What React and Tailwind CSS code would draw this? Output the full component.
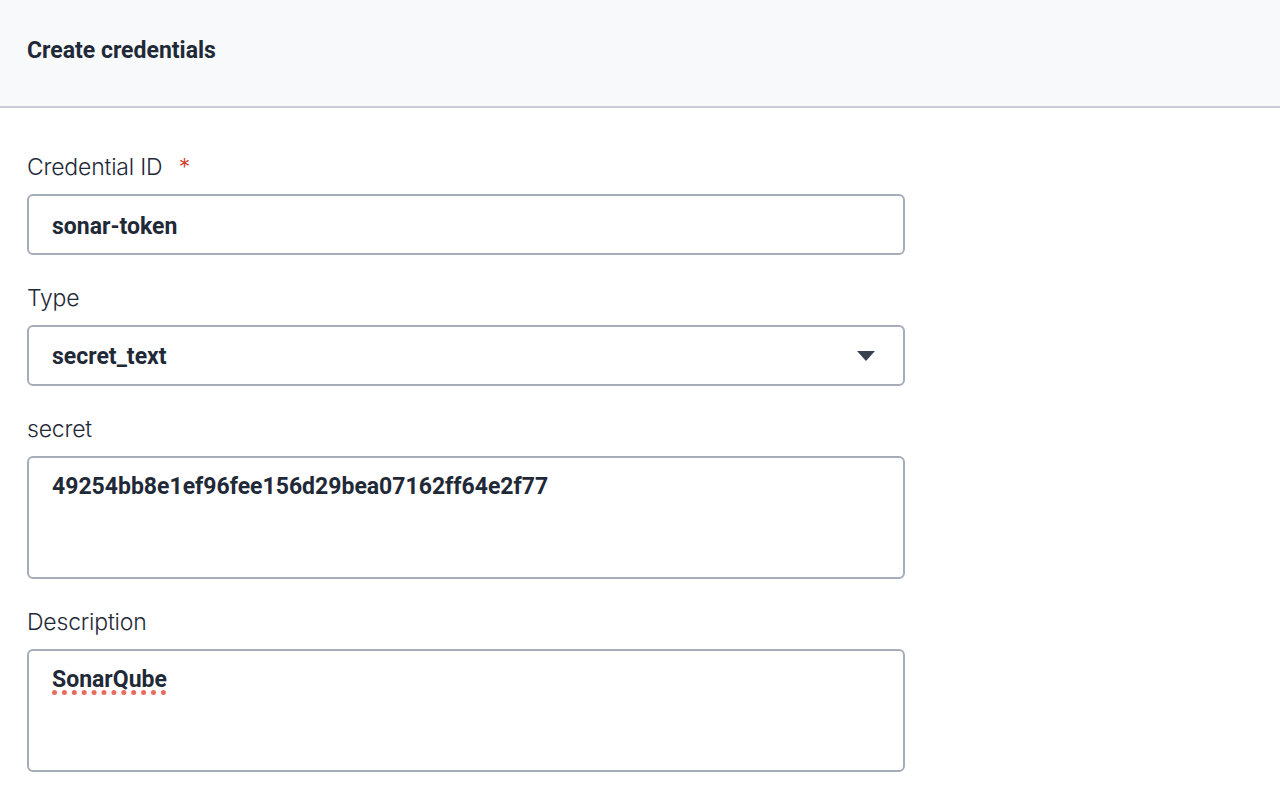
export default function App() {
  const label = "block h-[30px] leading-[30px] mb-3 text-[23px] text-[#1f2937] font-['Inter',sans-serif] font-light tracking-[-0.2px]"
  const box = "w-[878px] rounded-[6px] border-2 border-[#a6adb9] bg-white px-[23px] text-[23px] font-bold text-[#1f2937] font-['Roboto',sans-serif]"

  return (
    <div className="min-h-screen bg-white">
      <header className="h-[108px] bg-[#f8f9fb] border-b-2 border-[#c9cdd6] flex items-center px-[27px]">
        <h1 className="text-[23px] font-bold text-[#1f2937] font-['Roboto',sans-serif] -mt-[4px]">Create credentials</h1>
      </header>

      <main className="px-[27px] pt-[44px]">
        <div>
          <label className={label}>
            Credential ID <span className="ml-[10px] text-[#d33a2c]">*</span>
          </label>
          <div className={`${box} h-[61px] flex items-center pt-[6px]`}>sonar-token</div>
        </div>

        <div className="mt-[28px]">
          <label className={label}>Type</label>
          <div className={`${box} h-[61px] flex items-center justify-between pt-[3px]`}>
            <span>secret_text</span>
            <svg width="18" height="10" viewBox="0 0 18 10" className="mr-[5px] -mt-[3px]">
              <path d="M0 0 H18 L9 10 Z" fill="#374151" />
            </svg>
          </div>
        </div>

        <div className="mt-[28px]">
          <label className={label}>secret</label>
          <div className={`${box} h-[123px] pt-[12px]`}>49254bb8e1ef96fee156d29bea07162ff64e2f77</div>
        </div>

        <div className="mt-[28px]">
          <label className={label}>Description</label>
          <div className={`${box} h-[123px] pt-[12px]`}>
            <span className="underline decoration-dotted decoration-[#ea6b5d] decoration-[5px] underline-offset-[3px]">SonarQube</span>
          </div>
        </div>
      </main>
    </div>
  )
}
